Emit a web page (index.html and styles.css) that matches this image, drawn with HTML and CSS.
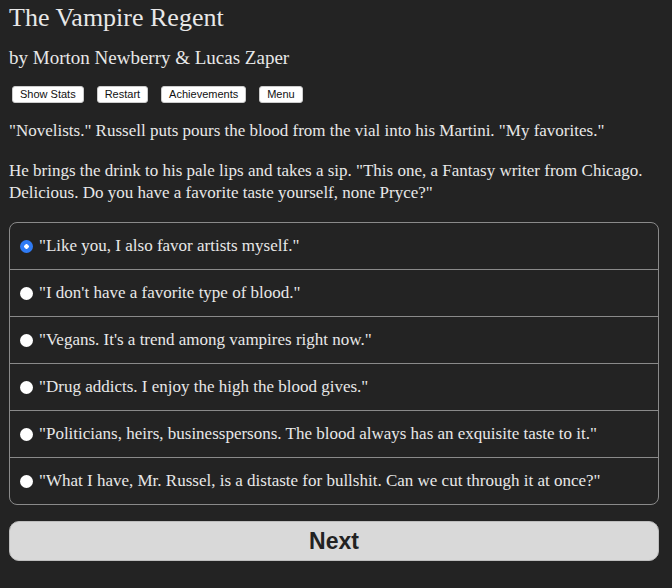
FILE: index.html
```html
<!DOCTYPE html>
<html lang="en">
<head>
<meta charset="utf-8">
<title>The Vampire Regent</title>
<link rel="stylesheet" href="styles.css">
</head>
<body>
<main class="page">
  <h1 class="title">The Vampire Regent</h1>
  <h2 class="byline">by Morton Newberry &amp; Lucas Zaper</h2>
  <nav class="toolbar">
    <button class="tool">Show Stats</button>
    <button class="tool">Restart</button>
    <button class="tool">Achievements</button>
    <button class="tool">Menu</button>
  </nav>
  <p class="text">"Novelists." Russell puts pours the blood from the vial into his Martini. "My favorites."</p>
  <p class="text">He brings the drink to his pale lips and takes a sip. "This one, a Fantasy writer from Chicago. Delicious. Do you have a favorite taste yourself, none Pryce?"</p>
  <form class="choices">
    <label class="choice"><input type="radio" name="c" checked><span>"Like you, I also favor artists myself."</span></label>
    <label class="choice"><input type="radio" name="c"><span>"I don't have a favorite type of blood."</span></label>
    <label class="choice"><input type="radio" name="c"><span>"Vegans. It's a trend among vampires right now."</span></label>
    <label class="choice"><input type="radio" name="c"><span>"Drug addicts. I enjoy the high the blood gives."</span></label>
    <label class="choice"><input type="radio" name="c"><span>"Politicians, heirs, businesspersons. The blood always has an exquisite taste to it."</span></label>
    <label class="choice"><input type="radio" name="c"><span>"What I have, Mr. Russel, is a distaste for bullshit. Can we cut through it at once?"</span></label>
  </form>
  <button class="next">Next</button>
</main>
</body>
</html>
```

FILE: styles.css
```css
html, body {
  margin: 0;
  padding: 0;
  background: #232323;
}

.page {
  padding: 0 13px 0 9px;
  color: #e8e8e8;
  font-family: "Liberation Serif", serif;
  font-size: 17px;
}

.title {
  margin: 3px 0 0;
  font-size: 26px;
  font-weight: normal;
  line-height: 30px;
}

.byline {
  margin: 14px 0 0;
  font-size: 19px;
  font-weight: normal;
  line-height: 22px;
}

.toolbar {
  display: flex;
  gap: 13px;
  margin: 17px 0 0 3px;
}

.tool {
  font-family: "Liberation Sans", sans-serif;
  font-size: 11px;
  line-height: 13px;
  color: #111;
  background: #fff;
  border: 1px solid #ccc;
  border-radius: 3px;
  padding: 1px 7px;
}

.text {
  margin: 17px 0 0;
  line-height: 22px;
}

.text + .text {
  margin-top: 18px;
}

.choices {
  margin: 18px 0 0;
  border: 1px solid #8a8a8a;
  border-radius: 8px;
  display: flex;
  flex-direction: column;
}

.choice {
  display: flex;
  align-items: center;
  gap: 6px;
  height: 46px;
  padding-left: 10px;
  border-top: 1px solid #8a8a8a;
}

.choice:first-child {
  border-top: none;
}

.choice input {
  appearance: none;
  margin: 0;
  width: 13px;
  height: 13px;
  border-radius: 50%;
  background: #fff;
  flex: none;
}

.choice input:checked {
  background: radial-gradient(circle, #fff 0 2px, #2f7bf5 2.5px);
}

.next {
  display: block;
  width: 100%;
  margin-top: 16px;
  height: 40px;
  border: 1px solid #bdbdbd;
  border-radius: 10px;
  background: #d9d9d9;
  color: #222;
  font-family: "Liberation Sans", sans-serif;
  font-weight: bold;
  font-size: 23px;
}
```
